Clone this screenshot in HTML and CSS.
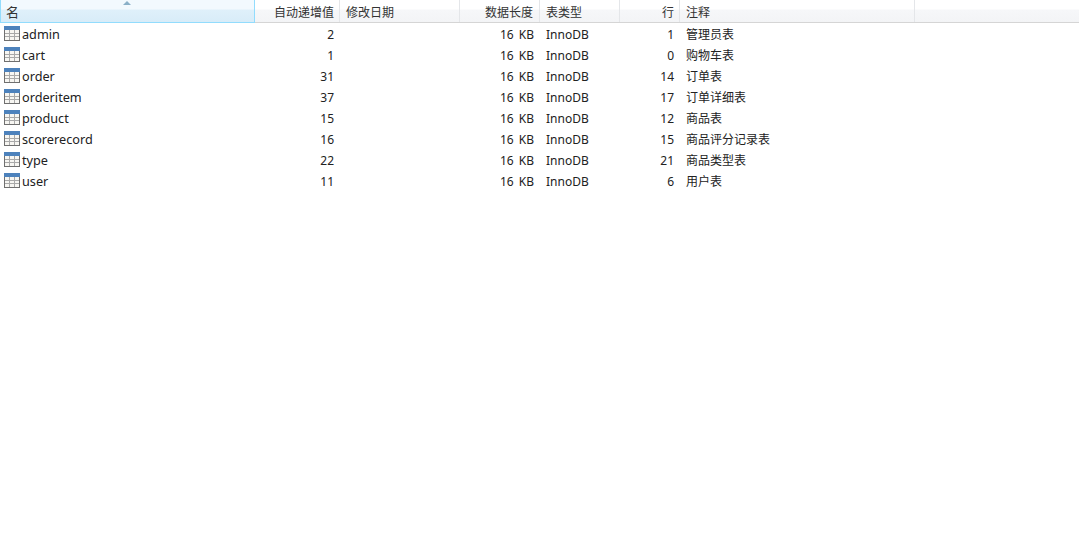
FILE: index.html
```html
<!DOCTYPE html>
<html lang="zh-CN">
<head>
    <meta charset="UTF-8">
    <title>表列表</title>
    <link rel="stylesheet" href="styles.css">
</head>
<body>
    <svg width="0" height="0" class="defs">
        <symbol id="table-icon" viewBox="0 0 16 15">
            <rect x="0" y="0" width="16" height="15" fill="#6f6f6f"/>
            <rect x="0" y="0" width="16" height="4" fill="#4d82bc"/>
            <rect x="1" y="4" width="14" height="10" fill="#f7f6f2"/>
            <path d="M1 7.5h14M1 10.5h14M5.5 4v10M10.5 4v10" stroke="#a9a9a9" stroke-width="1" fill="none"/>
        </symbol>
    </svg>
    <div class="list-view">
        <div class="header">
            <div class="col col-name head-active"><span class="sort-arrow"></span>名</div>
            <div class="col col-auto right">自动递增值</div>
            <div class="col col-date">修改日期</div>
            <div class="col col-size right">数据长度</div>
            <div class="col col-engine">表类型</div>
            <div class="col col-rows right">行</div>
            <div class="col col-note">注释</div>
            <div class="col col-fill"></div>
        </div>
        <div class="row">
            <div class="cell col-name"><svg class="icon"><use href="#table-icon"/></svg>admin</div>
            <div class="cell col-auto right">2</div>
            <div class="cell col-date"></div>
            <div class="cell col-size right">16 KB</div>
            <div class="cell col-engine">InnoDB</div>
            <div class="cell col-rows right">1</div>
            <div class="cell col-note">管理员表</div>
        </div>
        <div class="row">
            <div class="cell col-name"><svg class="icon"><use href="#table-icon"/></svg>cart</div>
            <div class="cell col-auto right">1</div>
            <div class="cell col-date"></div>
            <div class="cell col-size right">16 KB</div>
            <div class="cell col-engine">InnoDB</div>
            <div class="cell col-rows right">0</div>
            <div class="cell col-note">购物车表</div>
        </div>
        <div class="row">
            <div class="cell col-name"><svg class="icon"><use href="#table-icon"/></svg>order</div>
            <div class="cell col-auto right">31</div>
            <div class="cell col-date"></div>
            <div class="cell col-size right">16 KB</div>
            <div class="cell col-engine">InnoDB</div>
            <div class="cell col-rows right">14</div>
            <div class="cell col-note">订单表</div>
        </div>
        <div class="row">
            <div class="cell col-name"><svg class="icon"><use href="#table-icon"/></svg>orderitem</div>
            <div class="cell col-auto right">37</div>
            <div class="cell col-date"></div>
            <div class="cell col-size right">16 KB</div>
            <div class="cell col-engine">InnoDB</div>
            <div class="cell col-rows right">17</div>
            <div class="cell col-note">订单详细表</div>
        </div>
        <div class="row">
            <div class="cell col-name"><svg class="icon"><use href="#table-icon"/></svg>product</div>
            <div class="cell col-auto right">15</div>
            <div class="cell col-date"></div>
            <div class="cell col-size right">16 KB</div>
            <div class="cell col-engine">InnoDB</div>
            <div class="cell col-rows right">12</div>
            <div class="cell col-note">商品表</div>
        </div>
        <div class="row">
            <div class="cell col-name"><svg class="icon"><use href="#table-icon"/></svg>scorerecord</div>
            <div class="cell col-auto right">16</div>
            <div class="cell col-date"></div>
            <div class="cell col-size right">16 KB</div>
            <div class="cell col-engine">InnoDB</div>
            <div class="cell col-rows right">15</div>
            <div class="cell col-note">商品评分记录表</div>
        </div>
        <div class="row">
            <div class="cell col-name"><svg class="icon"><use href="#table-icon"/></svg>type</div>
            <div class="cell col-auto right">22</div>
            <div class="cell col-date"></div>
            <div class="cell col-size right">16 KB</div>
            <div class="cell col-engine">InnoDB</div>
            <div class="cell col-rows right">21</div>
            <div class="cell col-note">商品类型表</div>
        </div>
        <div class="row">
            <div class="cell col-name"><svg class="icon"><use href="#table-icon"/></svg>user</div>
            <div class="cell col-auto right">11</div>
            <div class="cell col-date"></div>
            <div class="cell col-size right">16 KB</div>
            <div class="cell col-engine">InnoDB</div>
            <div class="cell col-rows right">6</div>
            <div class="cell col-note">用户表</div>
        </div>
    </div>
</body>
</html>
```

FILE: styles.css
```css
body {
    margin: 0;
    background-color: #fff;
    color: #222;
    font-family: "Noto Sans", "Noto Sans CJK SC", sans-serif;
    font-size: 12px;
    overflow: hidden;
}

.defs {
    display: block;
    height: 0;
}

.list-view {
    width: 100%;
}

.header {
    display: flex;
    height: 22px;
    background: linear-gradient(#fff 0, #fff 9px, #f6f7f9 10px, #f3f4f6 22px);
    border-bottom: 1px solid #d5d5d5;
}

.col {
    position: relative;
    box-sizing: border-box;
    height: 22px;
    line-height: 25px;
    padding: 0 6px;
    border-right: 1px solid #e4e6e9;
    color: #333;
}

.col.right {
    padding-right: 5px;
}

.col-size.right {
    padding-right: 6px;
}

.head-active {
    background: linear-gradient(#f2f9fe 0, #f2f9fe 9px, #dff0fa 10px, #d8ecf8 22px);
    border-right: 1px solid #92dcfd;
    border-left: 1px solid #92dcfd;
    border-bottom: 1px solid #92dcfd;
    height: 23px;
    padding-left: 5px;
    font-size: 13px;
}

.sort-arrow {
    position: absolute;
    top: 1px;
    left: 122px;
    width: 0;
    height: 0;
    border-left: 4px solid transparent;
    border-right: 4px solid transparent;
    border-bottom: 4px solid #8ab0c8;
}

.row {
    display: flex;
    height: 21px;
    line-height: 24px;
}

.cell {
    box-sizing: border-box;
    padding: 0 6px;
    white-space: nowrap;
}

.right {
    text-align: right;
}

.col-name {
    width: 255px;
}

.col-auto {
    width: 85px;
}

.col-date {
    width: 120px;
}

.col-size {
    width: 80px;
    word-spacing: 2px;
}

.col-engine {
    width: 80px;
}

.col-rows {
    width: 60px;
}

.col-note {
    width: 235px;
}

.col-fill {
    flex: 1;
    border-right: none;
}

.cell.col-name {
    display: flex;
    align-items: center;
    padding-left: 4px;
    padding-top: 2px;
    font-size: 12.7px;
    line-height: 19px;
}

.icon {
    width: 16px;
    height: 15px;
    margin-right: 2px;
    margin-bottom: 2px;
    flex-shrink: 0;
}
```
